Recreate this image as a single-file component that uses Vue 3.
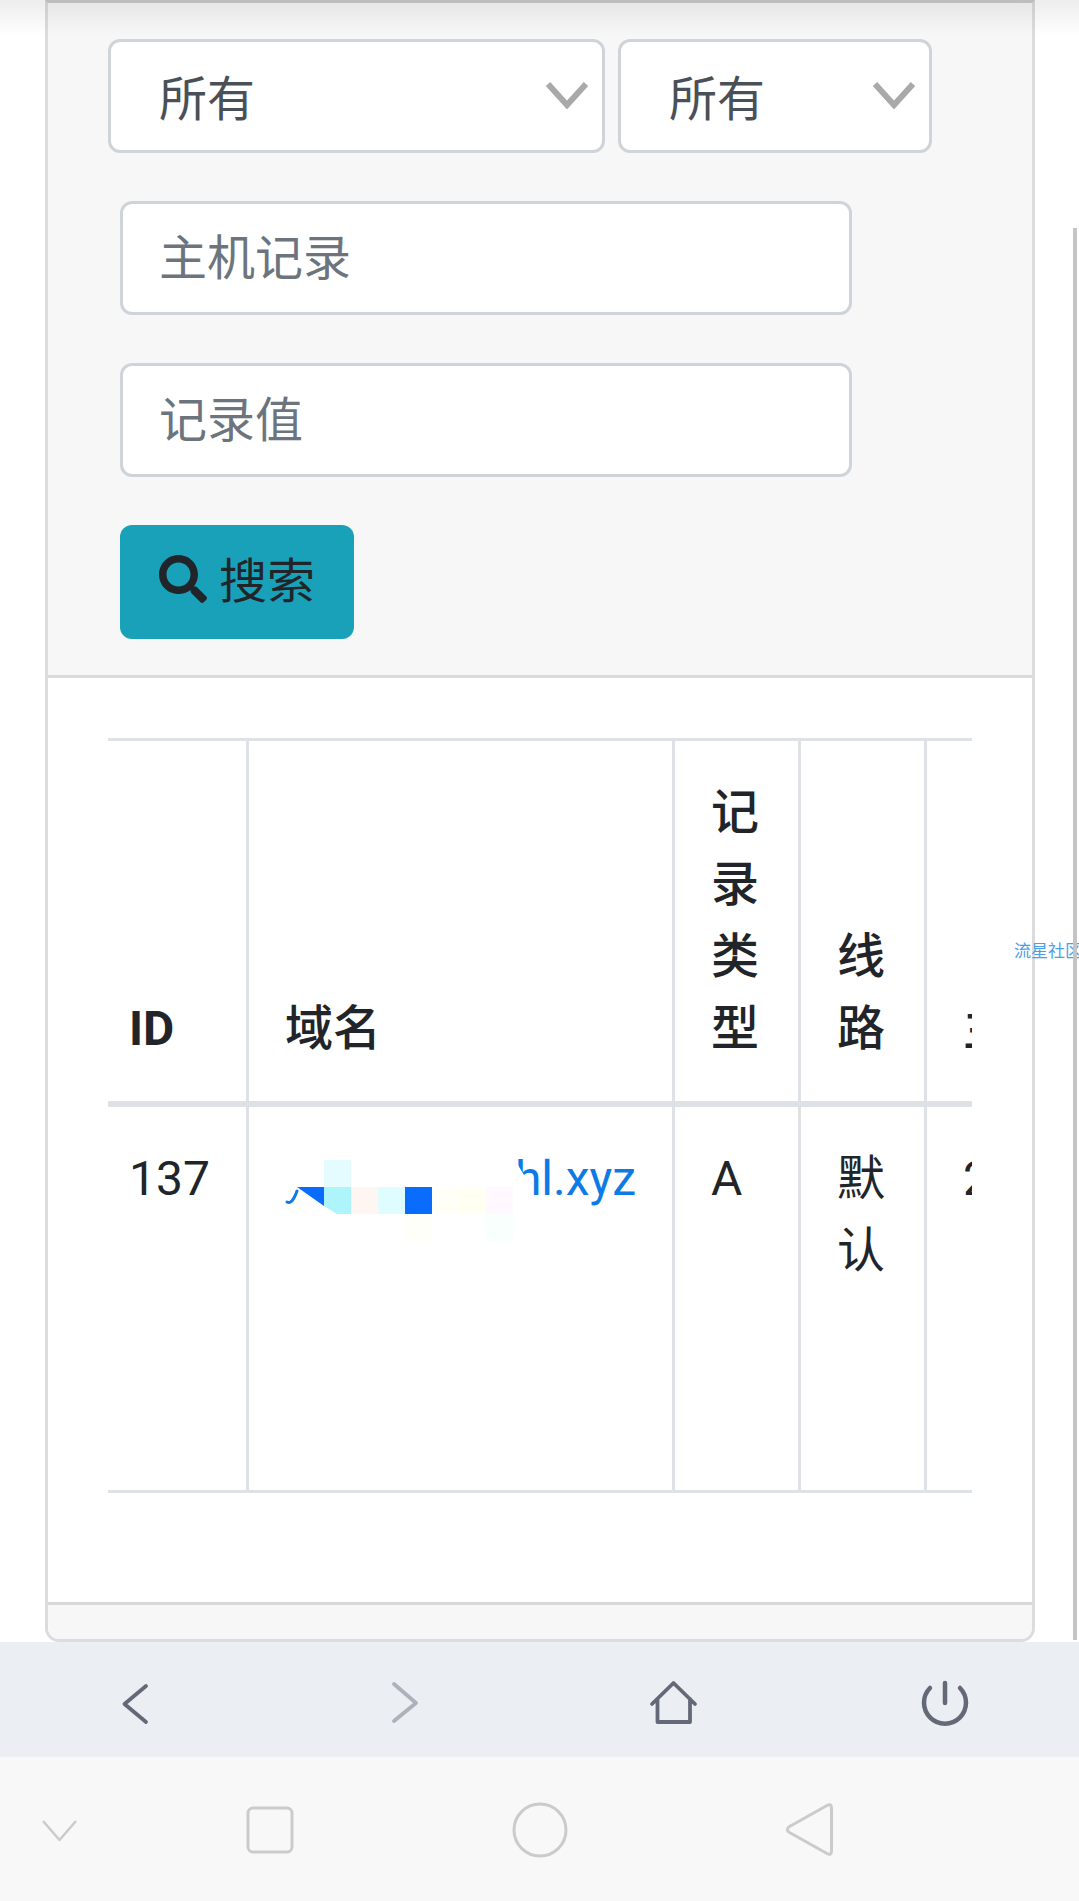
<script setup>
const columns = [153, 426, 126, 126, 260]
const selects = [
  { cls: 'select-wide' },
  { cls: 'select-narrow' },
]
const placeholders = ['主机记录', '记录值']
</script>

<template>
  <div class="screen">
    <main class="viewport">
      <section class="card">
        <form class="card-header" @submit.prevent>
          <div class="select-row">
            <div v-for="s in selects" :key="s.cls" class="select-wrap" :class="s.cls">
              <select class="field select"><option>所有</option></select>
              <svg class="chevron" viewBox="0 0 44 28"><path d="M3 3 L22 24 L41 3" /></svg>
            </div>
          </div>
          <div class="stack">
            <input v-for="p in placeholders" :key="p" class="field input" :placeholder="p" />
            <button class="btn" type="submit">
              <svg class="search" viewBox="0 0 512 512"><path d="M505 442.7L405.3 343c-4.5-4.5-10.6-7-17-7H372c27.6-35.3 44-79.7 44-128C416 93.1 322.9 0 208 0S0 93.1 0 208s93.1 208 208 208c48.3 0 92.7-16.4 128-44v16.3c0 6.4 2.5 12.5 7 17l99.7 99.7c9.4 9.4 24.6 9.4 33.9 0l28.3-28.3c9.4-9.4 9.4-24.6.1-34zM208 336c-70.7 0-128-57.2-128-128 0-70.7 57.2-128 128-128 70.7 0 128 57.2 128 128 0 70.7-57.2 128-128 128z" /></svg>
              <span>搜索</span>
            </button>
          </div>
        </form>
        <div class="card-body">
          <div class="table-wrap">
            <table class="table">
              <colgroup>
                <col v-for="(w, i) in columns" :key="i" :style="{ width: w + 'px' }" />
              </colgroup>
              <thead>
                <tr>
                  <th class="id-head">ID</th>
                  <th>域名</th>
                  <th>记录类型</th>
                  <th>线路</th>
                  <th class="nowrap">主机记录</th>
                </tr>
              </thead>
              <tbody>
                <tr>
                  <td>137</td>
                  <td class="domain">
                    <a href="#" @click.prevent>hl.xyz</a>
                    <svg class="mosaic" viewBox="0 0 245 85">
                      <path d="M7 43 Q12 46 17 32" fill="none" stroke="#0d7be6" stroke-width="3" stroke-linecap="round" />
                      <path d="M17 28 H44 V47 Z" fill="#0a6cfd" />
                      <path d="M44 28 H71 V55 H57 L44 47 Z" fill="#aef5fb" />
                      <rect x="44" y="1" width="27" height="27" fill="#e4fbff" />
                      <rect x="71" y="28" width="27" height="27" fill="#fff5f2" />
                      <rect x="98" y="28" width="27" height="27" fill="#dffcff" />
                      <rect x="125" y="28" width="27" height="27" fill="#0a6cfd" />
                      <rect x="152" y="28" width="27" height="27" fill="#fffff8" />
                      <rect x="179" y="28" width="27" height="27" fill="#fffff2" />
                      <rect x="206" y="28" width="27" height="27" fill="#fff8fe" />
                      <rect x="125" y="55" width="27" height="27" fill="#fffffa" />
                      <rect x="206" y="55" width="27" height="27" fill="#f8fffd" />
                      <path d="M233 6 H238 L247 21 V60 H233 Z" fill="#fff" />
                    </svg>
                  </td>
                  <td>A</td>
                  <td>默认</td>
                  <td>2</td>
                </tr>
              </tbody>
            </table>
          </div>
        </div>
        <div class="card-footer"></div>
      </section>
    </main>

    <nav class="toolbar">
      <button class="tool"><svg viewBox="0 0 60 60"><path d="M41 16 L19.5 34 L41 52" /></svg></button>
      <button class="tool off"><svg viewBox="0 0 60 60"><path d="M19 14 L41 33 L19 51" /></svg></button>
      <button class="tool"><svg viewBox="0 0 60 60"><path d="M8 34 L29.5 13 L51 34 M13.5 29 V52 H46 V29" /></svg></button>
      <button class="tool power"><svg viewBox="0 0 60 60"><path d="M15 18 A21 21 0 1 0 45 18 M30 13 V33" /></svg></button>
    </nav>

    <nav class="system-nav">
      <svg class="thin" viewBox="0 0 70 70"><path d="M18 27 L34.5 46 L51 27" /></svg>
      <svg viewBox="0 0 70 70"><rect x="13" y="14" width="44" height="44" rx="5" /></svg>
      <svg viewBox="0 0 70 70"><circle cx="35" cy="36" r="26" /></svg>
      <svg viewBox="0 0 70 70"><path d="M14.5 32.5 L52 11.5 Q56.5 9 56.5 14 V57 Q56.5 62 52 59.5 L14.5 38.5 Q10 35.5 14.5 32.5 Z" /></svg>
    </nav>

    <div class="top-shadow"></div>
    <a class="watermark" href="#" @click.prevent>流星社区</a>
    <div class="scrollbar"></div>
  </div>
</template>

<style scoped>
.screen {
  position: relative;
  display: flex;
  flex-direction: column;
  width: 1079px;
  height: 1901px;
  overflow: hidden;
  background: #fff;
  color: #212529;
  font-family: Roboto, "Noto Sans CJK SC", sans-serif;
  font-size: 48px;
  line-height: 72px;
}
.viewport {
  height: 1642px;
  padding: 0 44px 0 45px;
  box-sizing: border-box;
  overflow: hidden;
}
.card {
  display: flex;
  flex-direction: column;
  height: 1642px;
  box-sizing: border-box;
  border: 3px solid #dcdcdc;
  border-top-color: #cbcbcb;
  border-radius: 0 0 14px 14px;
}
.card-header {
  padding: 36px 0 36px 60px;
  background: #f7f7f7;
  border-bottom: 3px solid #d9dbdb;
}
.select-row {
  display: flex;
  gap: 13px;
}
.select-wrap {
  position: relative;
}
.select-wide { width: 497px; }
.select-narrow { width: 314px; }
.field {
  display: block;
  width: 100%;
  height: 114px;
  box-sizing: border-box;
  background: #fff;
  border: 3px solid #ced4da;
  border-radius: 12px;
  font: inherit;
  color: #495057;
  outline: none;
}
.select {
  appearance: none;
  -webkit-appearance: none;
  padding: 8px 0 0 48px;
}
.chevron {
  position: absolute;
  right: 16px;
  top: 42px;
  width: 44px;
  height: 28px;
  fill: none;
  stroke: #a9a9a9;
  stroke-width: 6;
}
.stack {
  display: flex;
  flex-direction: column;
  align-items: flex-start;
  gap: 48px;
  margin: 48px 0 0 12px;
}
.input {
  width: 732px;
  padding: 0 36px;
}
.input::placeholder {
  color: #6c757d;
  opacity: 1;
}
.btn {
  display: flex;
  align-items: center;
  gap: 12px;
  height: 114px;
  box-sizing: border-box;
  width: 234px;
  padding: 0 36px 0 39px;
  border: 0;
  border-radius: 12px;
  background: #18a1b8;
  color: #212529;
  font: inherit;
}
.search {
  width: 48px;
  height: 48px;
  flex: none;
  margin-top: -6px;
  fill: #212529;
}
.card-body {
  flex: 1;
  padding: 60px 60px 0;
  background: #fff;
}
.table-wrap {
  overflow: hidden;
  border-bottom: 3px solid #dee2e6;
}
.table {
  table-layout: fixed;
  width: 1091px;
  margin-left: -15px;
  border-collapse: separate;
  border-spacing: 0;
}
th, td {
  box-sizing: border-box;
  padding: 36px;
  text-align: left;
  vertical-align: top;
  border-left: 3px solid #dee2e6;
  font-weight: 400;
}
th {
  vertical-align: bottom;
  font-weight: 500;
  border-top: 3px solid #dee2e6;
  border-bottom: 6px solid #dee2e6;
}
th:first-child, td:first-child {
  border-left: 0;
}
.id-head {
  font-weight: 700;
}
.nowrap {
  white-space: nowrap;
}
td {
  height: 383px;
}
.domain {
  position: relative;
  text-align: right;
}
.domain a {
  color: #0d7be6;
  text-decoration: none;
}
.mosaic {
  position: absolute;
  left: 31px;
  top: 52px;
  width: 245px;
  height: 85px;
  overflow: visible;
}
.card-footer {
  height: 34px;
  background: #f7f7f7;
  border-top: 3px solid #d9d9d9;
  border-radius: 0 0 12px 12px;
}
.toolbar {
  display: grid;
  grid-template-columns: repeat(4, 1fr);
  height: 115px;
  background: #ebeef2;
}
.tool {
  display: flex;
  align-items: flex-start;
  justify-content: center;
  padding: 28px 0 0;
  border: 0;
  background: none;
}
.tool svg {
  width: 60px;
  height: 60px;
  fill: none;
  stroke: #646978;
  stroke-width: 3.8;
  stroke-linecap: round;
  stroke-linejoin: round;
}
.tool.off svg {
  stroke: #adb1bb;
}
.tool.power svg {
  stroke-width: 4.5;
  margin-left: 1px;
}
.system-nav {
  display: grid;
  grid-template-columns: 120px 300px 240px 300px;
  align-items: center;
  justify-items: center;
  height: 144px;
  background: #f8f8f8;
}
.system-nav svg {
  width: 70px;
  height: 70px;
  fill: none;
  stroke: #cbcbcb;
  stroke-width: 3;
  stroke-linejoin: round;
}
.system-nav .thin {
  stroke-width: 2.5;
}
.top-shadow {
  position: absolute;
  inset: 0 0 auto 0;
  height: 36px;
  background: linear-gradient(rgba(0, 0, 0, 0.07), rgba(0, 0, 0, 0));
  pointer-events: none;
}
.watermark {
  position: absolute;
  left: 1014px;
  top: 938px;
  font-size: 17px;
  line-height: 26px;
  white-space: nowrap;
  color: #4a9fe8;
  text-decoration: none;
}
.scrollbar {
  position: absolute;
  left: 1073px;
  top: 228px;
  width: 4px;
  height: 1412px;
  background: #c4c4c4;
}
</style>

<style>
html, body {
  margin: 0;
  overflow: hidden;
  background: #fff;
}
</style>
